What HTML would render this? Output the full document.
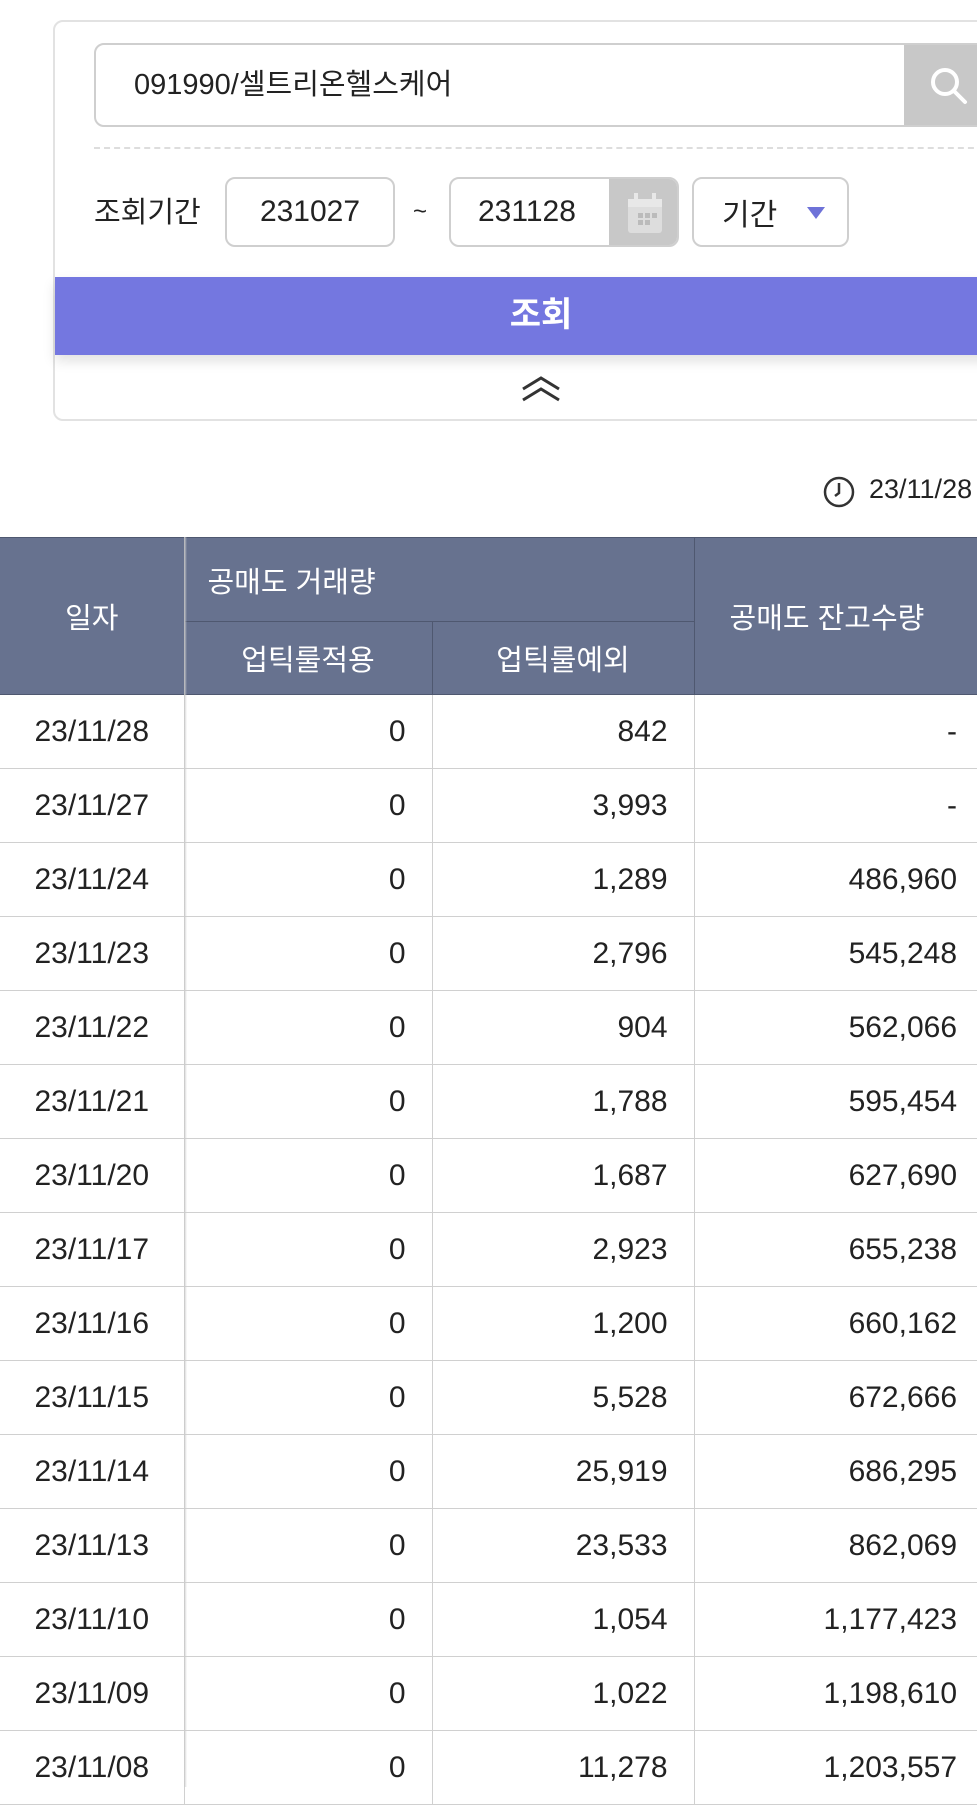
<!DOCTYPE html>
<html><head><meta charset="utf-8"><style>
*{margin:0;padding:0;box-sizing:border-box}
body{width:977px;height:1781px;overflow:hidden;background:#fff;position:relative;font-family:"Liberation Sans","Noto Sans CJK KR",sans-serif;color:#222}
.a{position:absolute}
.card{left:53px;top:20px;width:940px;height:401px;border:2px solid #e2e2e2;border-radius:10px}
.inp{left:94px;top:43px;width:900px;height:84px;border:2px solid #cfcfcf;border-radius:10px;overflow:hidden;background:#fff}
.box{border:2px solid #cfcfcf;border-radius:10px;background:#fff;font-size:30px;display:flex;align-items:center}
table{position:absolute;left:0;top:537px;border-collapse:collapse;width:977px;font-size:30px;table-layout:fixed}
th{background:#67728f;color:#fff;font-weight:normal;border:1.5px solid #4f5870;font-size:29px}
td{height:74px;border:1.5px solid #d0d0d0;text-align:right;padding-right:26px}
td:last-child{padding-right:20px;border-right:none}
td:first-child{text-align:center;padding:0;border-left:none}
</style></head><body>
<div class="a card"></div>
<div class="a inp"><div class="a" style="left:38px;top:0;line-height:80px;font-size:29px">091990/셀트리온헬스케어</div>
<div class="a" style="left:808px;top:0;width:100px;height:84px;background:#c8c8c8"><svg class="a" style="left:24px;top:20px" width="42" height="42" viewBox="0 0 42 42"><circle cx="17" cy="17" r="12" fill="none" stroke="#fff" stroke-width="4"/><path d="M26 26L37 37" stroke="#fff" stroke-width="4" stroke-linecap="round"/></svg></div></div>
<div class="a" style="left:94px;top:147px;width:900px;border-top:2px dashed #ddd"></div>
<div class="a" style="left:94px;top:192px;font-size:29px;line-height:42px">조회기간</div>
<div class="a box" style="left:225px;top:177px;width:170px;height:70px;justify-content:center">231027</div>
<div class="a" style="left:413px;top:198px;font-size:24px">~</div>
<div class="a box" style="left:449px;top:177px;width:230px;height:70px;overflow:hidden;padding-left:27px">231128
<div class="a" style="left:158px;top:0;width:72px;height:70px;background:#c8c8c8"><svg class="a" style="left:17px;top:12px" width="38" height="44" viewBox="0 0 38 44"><rect x="2" y="8" width="34" height="34" rx="3" fill="#ddd"/><rect x="2" y="8" width="34" height="8" fill="#e8e8e8"/><rect x="8" y="2" width="4" height="10" fill="#e8e8e8"/><rect x="26" y="2" width="4" height="10" fill="#e8e8e8"/><rect x="12" y="22" width="5" height="5" fill="#bbb"/><rect x="19" y="22" width="5" height="5" fill="#bbb"/><rect x="26" y="22" width="5" height="5" fill="#bbb"/><rect x="12" y="29" width="5" height="5" fill="#bbb"/><rect x="19" y="29" width="5" height="5" fill="#bbb"/></svg></div></div>
<div class="a box" style="left:692px;top:177px;width:157px;height:70px;padding-left:28px">기간<svg style="margin-left:30px" width="18" height="14"><path d="M0 2H18L9 14Z" fill="#6e72d8"/></svg></div>
<div class="a" style="left:55px;top:277px;width:972px;height:78px;background:#7477e0;color:#fff;font-weight:bold;font-size:34px;text-align:center;line-height:76px;box-shadow:0 6px 12px rgba(0,0,0,.12)">조회</div>
<svg class="a" style="left:521px;top:375px" width="40" height="28" viewBox="0 0 40 28"><path d="M2 14L20 3L38 14M2 25L20 14L38 25" fill="none" stroke="#333" stroke-width="3"/></svg>
<svg class="a" style="left:822px;top:475px" width="34" height="34" viewBox="0 0 34 34"><circle cx="17" cy="17" r="14" fill="none" stroke="#333" stroke-width="2.5"/><path d="M17 8V18L13 21" fill="none" stroke="#333" stroke-width="2.5"/></svg>
<div class="a" style="left:869px;top:474px;font-size:27px">23/11/28</div>
<table>
<colgroup><col style="width:184px"><col style="width:248px"><col style="width:262px"><col style="width:283px"></colgroup>
<tr style="height:84px"><th rowspan="2" style="border-left:none">일자</th><th colspan="2" style="text-align:left;padding-left:23px">공매도 거래량</th><th rowspan="2" style="text-align:left;padding-left:35px;border-right:none">공매도 잔고수량</th></tr>
<tr style="height:73px"><th>업틱룰적용</th><th>업틱룰예외</th></tr>
<tr><td>23/11/28</td><td>0</td><td>842</td><td>-</td></tr>
<tr><td>23/11/27</td><td>0</td><td>3,993</td><td>-</td></tr>
<tr><td>23/11/24</td><td>0</td><td>1,289</td><td>486,960</td></tr>
<tr><td>23/11/23</td><td>0</td><td>2,796</td><td>545,248</td></tr>
<tr><td>23/11/22</td><td>0</td><td>904</td><td>562,066</td></tr>
<tr><td>23/11/21</td><td>0</td><td>1,788</td><td>595,454</td></tr>
<tr><td>23/11/20</td><td>0</td><td>1,687</td><td>627,690</td></tr>
<tr><td>23/11/17</td><td>0</td><td>2,923</td><td>655,238</td></tr>
<tr><td>23/11/16</td><td>0</td><td>1,200</td><td>660,162</td></tr>
<tr><td>23/11/15</td><td>0</td><td>5,528</td><td>672,666</td></tr>
<tr><td>23/11/14</td><td>0</td><td>25,919</td><td>686,295</td></tr>
<tr><td>23/11/13</td><td>0</td><td>23,533</td><td>862,069</td></tr>
<tr><td>23/11/10</td><td>0</td><td>1,054</td><td>1,177,423</td></tr>
<tr><td>23/11/09</td><td>0</td><td>1,022</td><td>1,198,610</td></tr>
<tr><td>23/11/08</td><td>0</td><td>11,278</td><td>1,203,557</td></tr>
</table>
<div class="a" style="left:184px;top:537px;width:3px;height:1250px;background:linear-gradient(90deg,#ccc,rgba(0,0,0,0))"></div>
</body></html>
